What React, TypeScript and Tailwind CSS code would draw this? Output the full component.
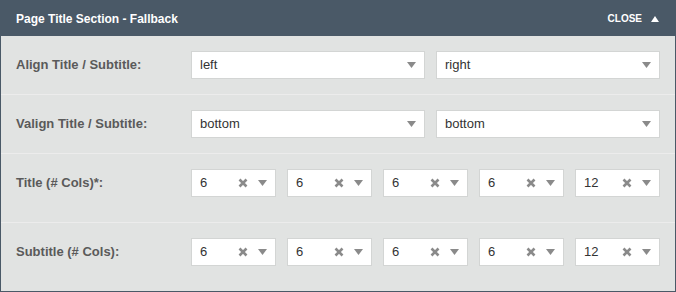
import { Fragment } from 'react';

const cols = ['6', '6', '6', '6', '12'];

function Caret() {
  return (
    <svg width="9" height="6" viewBox="0 0 9 6" className="shrink-0">
      <path d="M0 0 H9 L4.5 6 Z" fill="#8a8a8a" />
    </svg>
  );
}

function Clear() {
  return (
    <svg width="10" height="10" viewBox="0 0 10 10" className="shrink-0">
      <path d="M1.5 1.5 L8.5 8.5 M8.5 1.5 L1.5 8.5" stroke="#8a8a8a" strokeWidth="2.6" />
    </svg>
  );
}

function Select({ value, className = '' }: { value: string; className?: string }) {
  return (
    <div className={`flex h-[28px] items-center border border-[#d3d5d4] bg-white pl-[8px] pr-[8px] ${className}`}>
      <span className="flex-1 text-[13px] text-[#333]">{value}</span>
      <Caret />
    </div>
  );
}

function ColSelect({ value }: { value: string }) {
  return (
    <div className="flex h-[28px] flex-1 items-center border border-[#d3d5d4] bg-white pl-[8px] pr-[8px]">
      <span className="flex-1 text-[13px] text-[#333]">{value}</span>
      <Clear />
      <span className="w-[10px]" />
      <Caret />
    </div>
  );
}

export default function App() {
  const rows = [
    { label: 'Align Title / Subtitle:', values: ['left', 'right'] },
    { label: 'Valign Title / Subtitle:', values: ['bottom', 'bottom'] },
  ];

  return (
    <div className="h-[292px] w-[676px] border border-[#4a5967] bg-[#e1e3e2] font-['Liberation_Sans',Arial,sans-serif]">
      {/* Header */}
      <div className="flex h-[35px] items-center justify-between bg-[#4a5967] pl-[15px] pr-[16px]">
        <span className="text-[12px] font-bold text-white">Page Title Section - Fallback</span>
        <span className="flex items-center gap-[9px] text-[10px] font-bold text-white">
          CLOSE
          <svg width="8" height="6" viewBox="0 0 8 6">
            <path d="M0 6 H8 L4 0 Z" fill="#fff" />
          </svg>
        </span>
      </div>

      {rows.map((r) => (
        <div key={r.label} className="flex items-center border-b border-[#ececec] px-[15px] py-[15px]">
          <span className="w-[175px] text-[13px] font-bold text-[#5a5a5a]">{r.label}</span>
          <div className="flex flex-1 gap-[11px]">
            <Select value={r.values[0]} className="w-[234px]" />
            <Select value={r.values[1]} className="flex-1" />
          </div>
        </div>
      ))}

      {['Title (# Cols)*:', 'Subtitle (# Cols):'].map((label, i) => (
        <Fragment key={label}>
          <div className={`flex items-center px-[15px] pt-[15px] pb-[25px] ${i === 0 ? 'border-b border-[#ececec]' : ''}`}>
            <span className="w-[175px] text-[13px] font-bold text-[#5a5a5a]">{label}</span>
            <div className="flex flex-1 gap-[11px]">
              {cols.map((c, j) => (
                <ColSelect key={j} value={c} />
              ))}
            </div>
          </div>
        </Fragment>
      ))}
    </div>
  );
}
